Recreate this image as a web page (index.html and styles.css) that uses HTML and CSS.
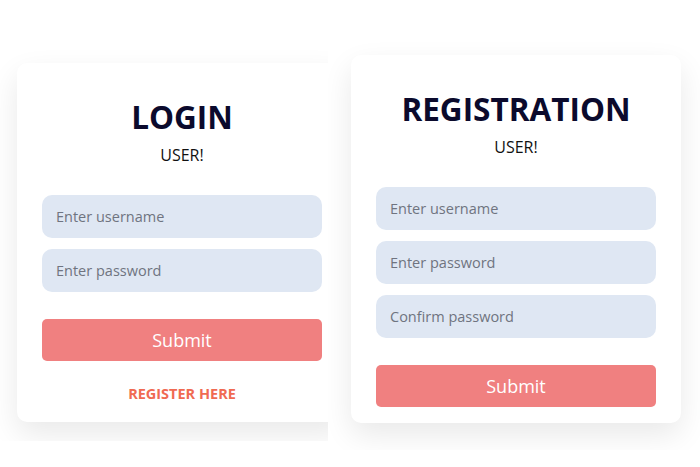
FILE: index.html
```html
<!DOCTYPE html>
<html lang="en">
<head>
<meta charset="utf-8">
<title>Login / Registration</title>
<link rel="stylesheet" href="styles.css">
</head>
<body>
<div class="page">
  <section class="panel panel-login">
    <form class="card">
      <h1 class="title">LOGIN</h1>
      <p class="subtitle">USER!</p>
      <div class="fields">
        <input class="field" type="text" placeholder="Enter username">
        <input class="field" type="password" placeholder="Enter password">
      </div>
      <button class="submit" type="button">Submit</button>
      <a class="link" href="#">REGISTER HERE</a>
    </form>
  </section>
  <section class="panel panel-register">
    <form class="card">
      <h1 class="title">REGISTRATION</h1>
      <p class="subtitle">USER!</p>
      <div class="fields">
        <input class="field" type="text" placeholder="Enter username">
        <input class="field" type="password" placeholder="Enter password">
        <input class="field" type="password" placeholder="Confirm password">
      </div>
      <button class="submit" type="button">Submit</button>
    </form>
  </section>
</div>
</body>
</html>
```
FILE: styles.css
```css
html, body {
  margin: 0;
  padding: 0;
  background: #ffffff;
}

body {
  font-family: "Open Sans", "Liberation Sans", sans-serif;
}

.page {
  display: flex;
  align-items: flex-start;
}

.panel {
  box-sizing: border-box;
  overflow: hidden;
  background: #ffffff;
  flex: none;
}

.panel-login {
  width: 328px;
  height: 441px;
  padding: 63px 0 0 17px;
}

.panel-register {
  width: 372px;
  height: 450px;
  padding: 55px 0 0 23px;
}

.card {
  box-sizing: border-box;
  width: 330px;
  background: #ffffff;
  border-radius: 10px;
  box-shadow: 0 12px 30px rgba(0, 0, 0, 0.09);
  padding: 34px 25px 16px;
  display: flex;
  flex-direction: column;
  align-items: stretch;
  text-align: center;
}

.title {
  margin: 0;
  font-size: 31.5px;
  line-height: 40px;
  font-weight: 700;
  color: #0b0a2c;
  letter-spacing: 0;
}

.subtitle {
  margin: 7px 0 0;
  font-size: 16px;
  line-height: 22px;
  color: #111111;
}

.fields {
  margin-top: 29px;
  display: flex;
  flex-direction: column;
  gap: 11px;
}

.field {
  box-sizing: border-box;
  height: 43px;
  width: 100%;
  border: none;
  outline: none;
  border-radius: 10px;
  background: #dfe7f3;
  padding: 0 14px;
  font-family: inherit;
  font-size: 14.5px;
  color: #333;
}

.field::placeholder {
  color: #6f7480;
}

.submit {
  margin-top: 27px;
  height: 42px;
  border: none;
  border-radius: 5px;
  background: #f08080;
  color: #ffffff;
  font-family: inherit;
  font-size: 18px;
  font-weight: 500;
  cursor: pointer;
}

.link {
  margin: 23px 0 2px;
  font-size: 14.5px;
  line-height: 20px;
  font-weight: 700;
  color: #f06a52;
  text-decoration: none;
}
```
